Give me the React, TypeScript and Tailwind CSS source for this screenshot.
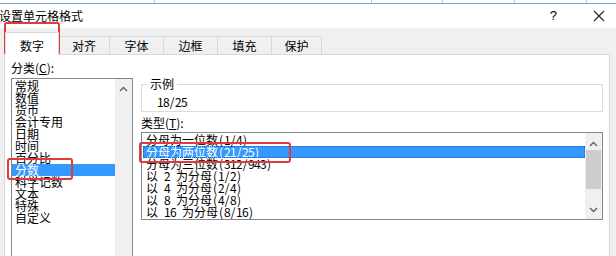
import React from 'react';

const categories = ['常规', '数值', '货币', '会计专用', '日期', '时间', '百分比', '分数', '科学记数', '文本', '特殊', '自定义'];

const types = [
  '分母为一位数(1/4)',
  '分母为两位数(21/25)',
  '分母为三位数(312/943)',
  '以 2 为分母(1/2)',
  '以 4 为分母(2/4)',
  '以 8 为分母(4/8)',
  '以 16 为分母(8/16)',
];

const tabs = [
  { label: '对齐', w: 'w-[51px]' },
  { label: '字体', w: 'w-[54px]' },
  { label: '边框', w: 'w-[54px]' },
  { label: '填充', w: 'w-[54px]' },
  { label: '保护', w: 'w-[50px]' },
];

// half-width chars get a fixed 6px cell, like the old bitmap font
function Mono({ text }: { text: string }) {
  return (
    <>
      {Array.from(text).map((ch, i) =>
        ch.charCodeAt(0) < 128 ? (
          <span key={i} className="inline-block w-[6px] text-center">
            {ch === ' ' ? '\u00a0' : ch}
          </span>
        ) : (
          <span key={i}>{ch}</span>
        )
      )}
    </>
  );
}

function Chevron({ up }: { up?: boolean }) {
  return (
    <svg width="9" height="6" viewBox="0 0 9 6" className="text-[#606060]">
      <path d={up ? 'M1 5 L4.5 1.5 L8 5' : 'M1 1 L4.5 4.5 L8 1'} fill="none" stroke="currentColor" strokeWidth="1.4" />
    </svg>
  );
}

export default function App() {
  return (
    <div className="relative w-[616px] h-[256px] overflow-hidden bg-[#f0f0f0] text-black text-[12px] font-['Noto_Sans_CJK_SC',sans-serif]">
      {/* strip of the sheet behind */}
      <div className="flex h-[4px] bg-white border-b border-[#7ea6cc]">
        <div className="w-[155px] border-r border-[#c8c8c8]" />
        <div className="w-[217px] border-r border-[#c8c8c8]" />
        <div className="w-[71px] border-r border-[#c8c8c8]" />
        <div className="w-[72px] border-r border-[#c8c8c8]" />
        <div className="w-[72px] border-r border-[#c8c8c8]" />
        <div className="flex-1" />
      </div>

      {/* Title bar */}
      <div className="flex items-center h-[24px] bg-white">
        <span className="leading-[14px] -ml-px">设置单元格格式</span>
        <span className="ml-auto mr-[36px] text-[13px] leading-[14px] font-['Liberation_Sans',sans-serif]">?</span>
        <svg width="12" height="12" viewBox="0 0 12 12" className="mr-[11px]">
          <path d="M1 1 L11 11 M11 1 L1 11" stroke="#222" strokeWidth="1.1" />
        </svg>
      </div>

      <div className="px-[4px] pt-[4px]">
        {/* Tabs */}
        <div className="flex items-end h-[22px] pl-px">
          <div className="relative z-10 -mb-px h-[23px] w-[54px] bg-white border-l border-t border-r border-[#d9d9d9] flex items-center justify-center pt-[3px]">
            数字
          </div>
          {tabs.map((t) => (
            <div
              key={t.label}
              className={`${t.w} h-[18px] border-t border-r border-[#d9d9d9] flex items-center justify-center`}
            >
              {t.label}
            </div>
          ))}
        </div>

        {/* Panel */}
        <div className="w-[606px] h-[210px] bg-white border border-[#d9d9d9] flex pl-[6px] pt-[6px]">
          {/* Category column */}
          <div className="w-[122px] flex flex-col">
            <div className="h-[18px] leading-[14px]">
              分类(<span className="underline">C</span>):
            </div>
            <div className="flex h-[200px] border border-[#828790]">
              <div className="flex-1 pt-px">
                {categories.map((c) => (
                  <div
                    key={c}
                    className={`h-[12px] leading-[12px] pl-[3px] ${c === '分数' ? 'bg-[#3399ff] text-white' : ''}`}
                  >
                    {c}
                  </div>
                ))}
              </div>
              <div className="w-[17px] bg-[#f0f0f0] flex justify-center pt-[7px]">
                <Chevron up />
              </div>
            </div>
          </div>

          {/* Right column */}
          <div className="ml-[8px] w-[462px] flex flex-col">
            <fieldset className="mt-[17px] h-[34px] border border-[#dcdcdc] px-[15px]">
              <legend className="ml-[-10px] px-[3px] leading-[12px]">示例</legend>
              <div className="pt-[5px] leading-[13px]">
                <Mono text="18/25" />
              </div>
            </fieldset>
            <div className="mt-[4px] leading-[14px]">
              类型(<span className="underline">T</span>):
            </div>
            <div className="mt-[2px] h-[88px] flex border border-[#828790]">
              <div className="flex-1 pt-px pl-px">
                {types.map((t, i) => (
                  <div
                    key={t}
                    className={`h-[12px] leading-[12px] pl-[3px] whitespace-pre ${i === 1 ? 'bg-[#3399ff] text-white outline outline-1 outline-dotted outline-[#1d5fa8] -outline-offset-1' : ''}`}
                  >
                    <Mono text={t} />
                  </div>
                ))}
              </div>
              <div className="w-[17px] bg-[#f0f0f0] flex flex-col items-center pt-[8px] pb-[6px]">
                <Chevron up />
                <div className="mt-[3px] h-[39px] w-[15px] bg-[#cdcdcd]" />
                <div className="mt-auto">
                  <Chevron />
                </div>
              </div>
            </div>
          </div>
        </div>
      </div>

      {/* Red annotation boxes */}
      <div className="absolute left-[4px] top-[22px] w-[56px] h-[33px] border-2 border-[#e0393e] rounded-[3px]" />
      <div className="absolute left-[7px] top-[158px] w-[66px] h-[22px] border-2 border-[#e0393e] rounded-[3px]" />
      <div className="absolute left-[139px] top-[142px] w-[152px] h-[21px] border-2 border-[#e0393e] rounded-[3px]" />
    </div>
  );
}
